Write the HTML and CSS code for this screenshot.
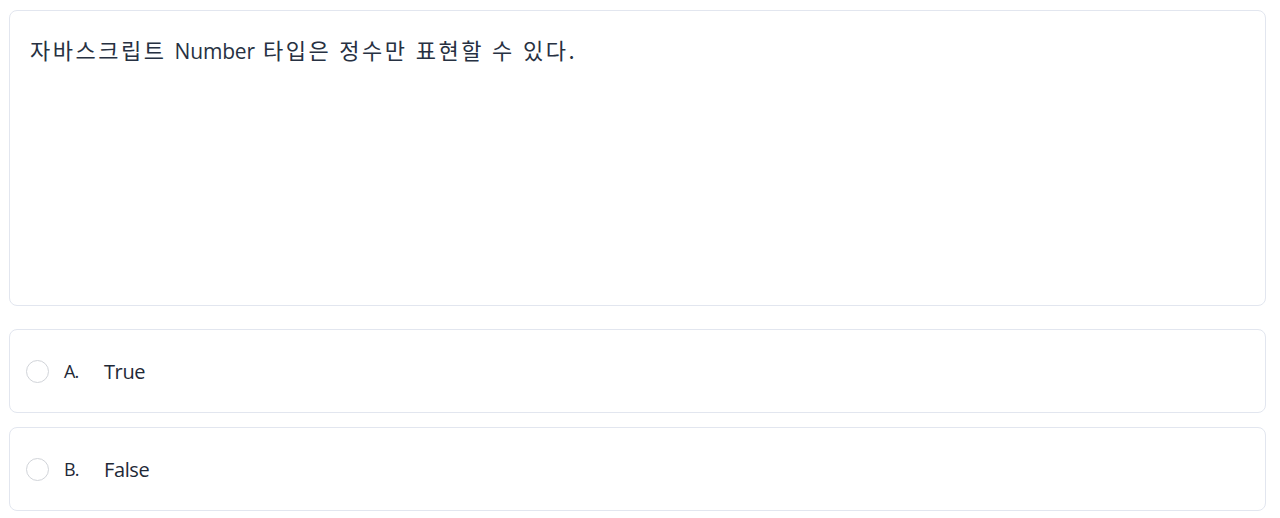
FILE: index.html
```html
<!DOCTYPE html>
<html lang="ko">
<head>
<meta charset="utf-8">
<link rel="stylesheet" href="styles.css">
</head>
<body>
<div class="quiz">
  <div class="question-card">
    <p class="question">자바스크립트 <span class="latin">Number</span> 타입은 정수만 표현할 수 있다.</p>
  </div>
  <ul class="options">
    <li class="option"><span class="radio"></span><span class="label">A.</span><span class="text">True</span></li>
    <li class="option"><span class="radio"></span><span class="label">B.</span><span class="text">False</span></li>
  </ul>
</div>
</body>
</html>
```
FILE: styles.css
```css
* { box-sizing: border-box; }
body {
  margin: 0;
  background: #fff;
  font-family: "Open Sans", "Noto Sans CJK KR", sans-serif;
  color: #1f2937;
}
.quiz {
  padding: 10px 14px 0 9px;
  display: flex;
  flex-direction: column;
}
.question-card {
  height: 296px;
  border: 1px solid #e2e6ef;
  border-radius: 8px;
  padding: 23px 20px;
}
.question {
  margin: 0;
  font-family: "Noto Sans CJK KR", sans-serif;
  font-size: 22px;
  line-height: 30px;
  letter-spacing: 2.5px;
  word-spacing: -0.5px;
  color: #273142;
}
.latin {
  font-family: "Open Sans", sans-serif;
  font-size: 21px;
  letter-spacing: -0.2px;
}
.options {
  list-style: none;
  margin: 23px 0 0;
  padding: 0;
  display: flex;
  flex-direction: column;
  gap: 14px;
}
.option {
  height: 84px;
  border: 1px solid #e2e6ef;
  border-radius: 8px;
  display: flex;
  align-items: center;
  padding: 0 16px;
  font-size: 20px;
}
.radio {
  width: 23px;
  height: 23px;
  border: 1px solid #d1d4d9;
  border-radius: 50%;
  margin-right: 15px;
}
.label {
  font-size: 18px;
  width: 40px;
  letter-spacing: -1px;
}
.text {
  font-size: 20px;
  letter-spacing: -0.4px;
}
```
